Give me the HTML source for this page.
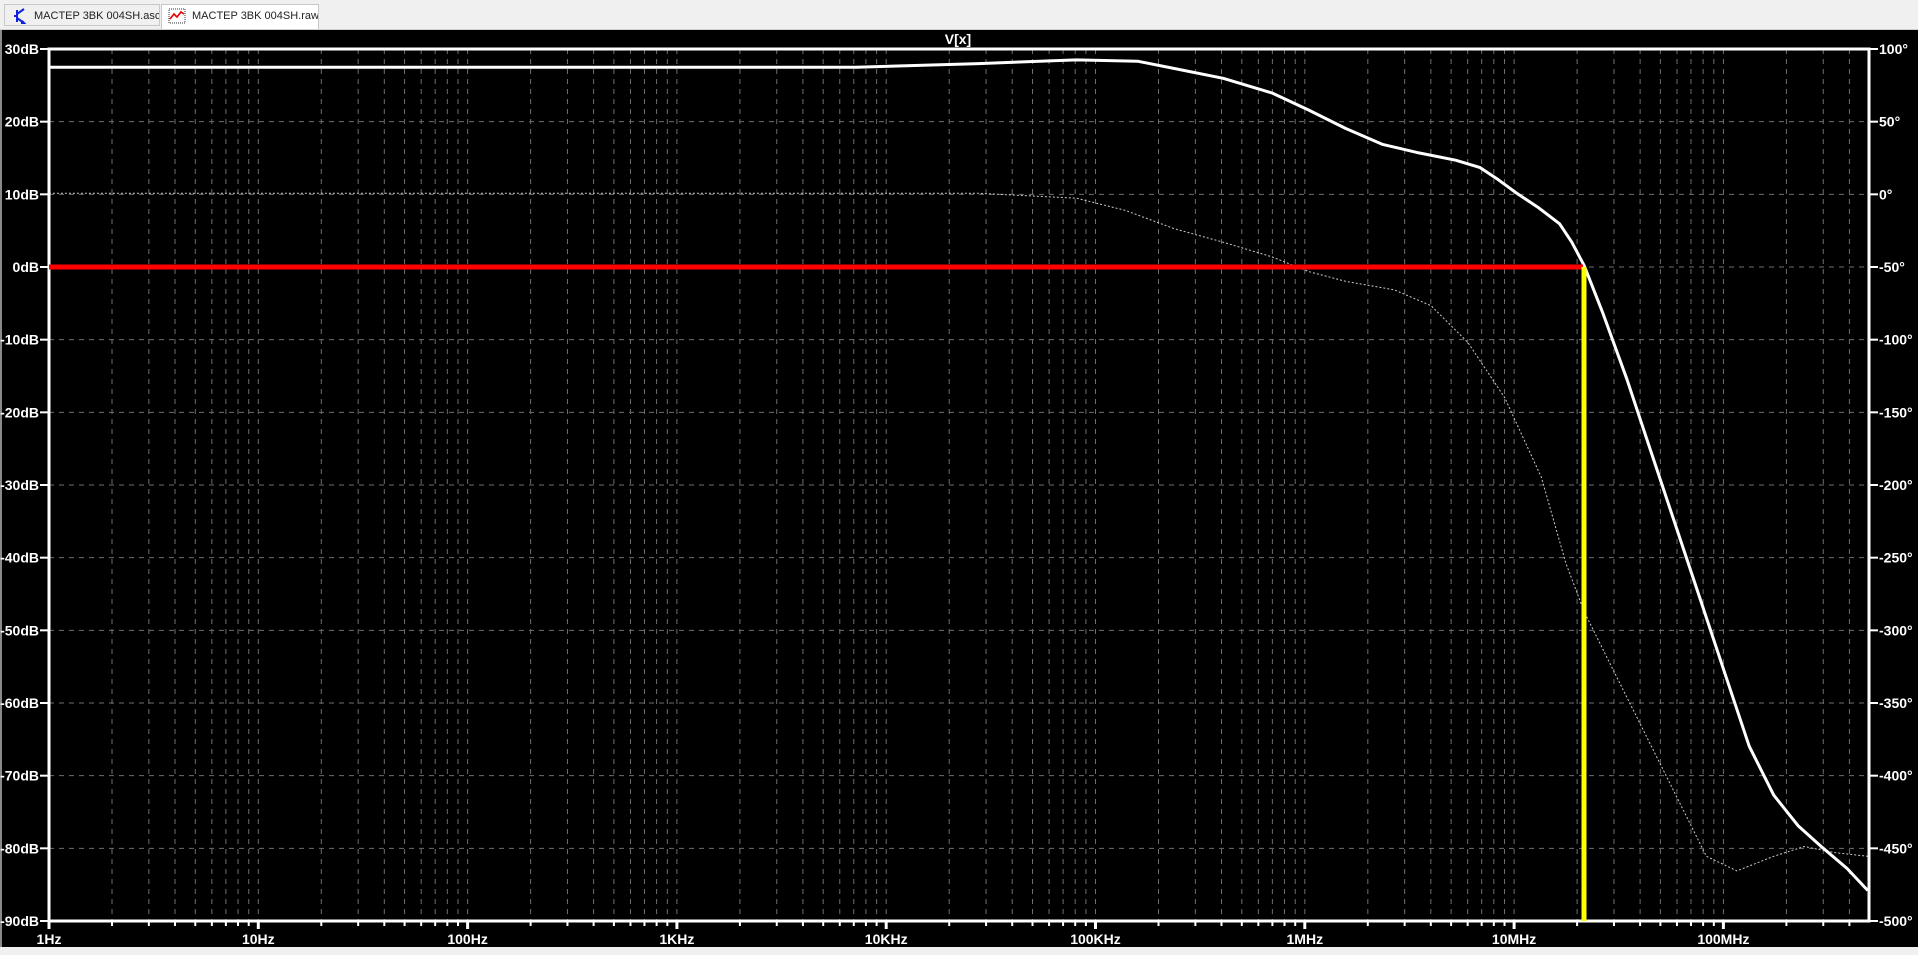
<!DOCTYPE html>
<html><head><meta charset="utf-8">
<style>
html,body{margin:0;padding:0;width:1918px;height:955px;overflow:hidden;background:#f0f0f0;font-family:"Liberation Sans",sans-serif;}
#tabs{position:absolute;left:0;top:0;width:1918px;height:29px;background:#f0f0f0;border-bottom:1px solid #d0d0d0;}
.tab{position:absolute;top:4px;height:22px;font-size:11px;color:#222;line-height:22px;box-sizing:border-box;border:1px solid #c8c8c8;white-space:nowrap;overflow:hidden;}
#plot{position:absolute;left:2px;top:30px;width:1916px;height:917px;background:#000;}
#bl{position:absolute;left:0;top:30px;width:2px;height:917px;background:#8a8a8a;}
</style></head><body>
<div id="tabs">
 <div class="tab" style="left:4px;width:156px;background:#f0f0f0;padding-left:29px;">
  <svg style="position:absolute;left:8px;top:3px" width="16" height="16" viewBox="0 0 16 16"><path d="M4 2v12M4 8h-3M4 6l7-5M4 10l7 5M9 13l2 2-3 0" stroke="#1020e0" stroke-width="2" fill="none"/></svg>
  MACTEP 3BK 004SH.asc</div>
 <div class="tab" style="left:161px;width:158px;background:#fff;padding-left:30px;border-bottom:none;height:25px;">
  <svg style="position:absolute;left:6px;top:3px" width="18" height="16" viewBox="0 0 18 16"><rect x="1" y="1" width="16" height="14" fill="#fff" stroke="#333" stroke-width="1" stroke-dasharray="1,1"/><path d="M2 11l4-5 3 3 4-5 3 2" stroke="#e00" stroke-width="1.6" fill="none"/></svg>
  MACTEP 3BK 004SH.raw</div>
</div>
<div id="bl"></div>
<div id="plot"></div>
<svg id="s" width="1918" height="955" style="position:absolute;left:0;top:0" font-family="Liberation Sans, sans-serif" font-weight="bold" font-size="14">
</svg>
<script>
var s=document.getElementById('s'),NS='http://www.w3.org/2000/svg';
function el(t,a,txt){var e=document.createElementNS(NS,t);for(var k in a)e.setAttribute(k,a[k]);if(txt!=null)e.textContent=txt;s.appendChild(e);return e;}
var L=49,R=1869,T=49,B=921,D=209.3,H=(B-T)/12;
for(var d=0;d<9;d++){for(var m=1;m<=9;m++){var x=L+(d+Math.log10(m))*D;if(x>R-1)break;
 if(!(d==0&&m==1))el('line',{x1:x,y1:T,x2:x,y2:B,stroke:'#6e6e6e','stroke-width':1,'stroke-dasharray':'5,5'});
 el('line',{x1:x,y1:B,x2:x,y2:B+(m==1?8:5),stroke:'#fff','stroke-width':m==1?3:2});}}
var dl=['30dB','20dB','10dB','0dB','-10dB','-20dB','-30dB','-40dB','-50dB','-60dB','-70dB','-80dB','-90dB'];
for(var i=0;i<=12;i++){var y=T+i*H;
 if(i>0&&i<12)el('line',{x1:L,y1:y,x2:R,y2:y,stroke:'#6e6e6e','stroke-width':1,'stroke-dasharray':'5,5'});
 el('line',{x1:L-9,y1:y,x2:L,y2:y,stroke:'#fff','stroke-width':2});
 el('line',{x1:R,y1:y,x2:R+9,y2:y,stroke:'#fff','stroke-width':2});
 el('text',{x:L-10,y:y+5,fill:'#fff','text-anchor':'end'},dl[i]);
 el('text',{x:R+10,y:y+5,fill:'#fff'},(100-50*i)+'°');}
var fl=['1Hz','10Hz','100Hz','1KHz','10KHz','100KHz','1MHz','10MHz','100MHz'];
for(var d=0;d<9;d++)el('text',{x:L+d*D,y:B+23,fill:'#fff','text-anchor':'middle'},fl[d]);
el('text',{x:958,y:44,fill:'#fff','text-anchor':'middle'},'V[x]');
var k=1918/1568;
function pts(a){return a.map(function(p){return (p[0]*k).toFixed(1)+','+(p[1]*k).toFixed(1)}).join(' ');}
var ph=[[40,158],[800,158],[880,162],[920,172],[960,187],[1000,198],[1040,210],[1070,222],[1100,230],[1140,237],[1170,250],[1200,280],[1230,325],[1260,390],[1280,460],[1295,500],[1320,550],[1345,600],[1370,650],[1395,700],[1420,712],[1450,700],[1475,692],[1500,697],[1527,700]];
el('polyline',{points:pts(ph),fill:'none',stroke:'#ccc','stroke-width':1,'stroke-dasharray':'2,2'});
var mg=[[40,55],[700,55],[800,52],[880,49],[930,50],[960,56],[1000,64],[1040,76],[1070,90],[1100,105],[1130,118],[1160,125],[1190,131],[1210,137],[1225,147],[1240,158],[1258,170],[1275,183],[1285,198],[1295,217],[1310,255],[1330,310],[1350,370],[1370,430],[1390,490],[1410,550],[1430,610],[1450,650],[1470,675],[1490,693],[1510,710],[1527,728]];
el('polyline',{points:pts(mg),fill:'none',stroke:'#fff','stroke-width':3,'stroke-linejoin':'round'});
el('rect',{x:L,y:T,width:R-L,height:B-T,fill:'none',stroke:'#fff','stroke-width':3});
el('line',{x1:L,y1:T+3*H,x2:1583,y2:T+3*H,stroke:'#ff0000','stroke-width':5});
el('line',{x1:1584,y1:T+3*H,x2:1584,y2:B,stroke:'#ffff00','stroke-width':5});
</script>
</body></html>
